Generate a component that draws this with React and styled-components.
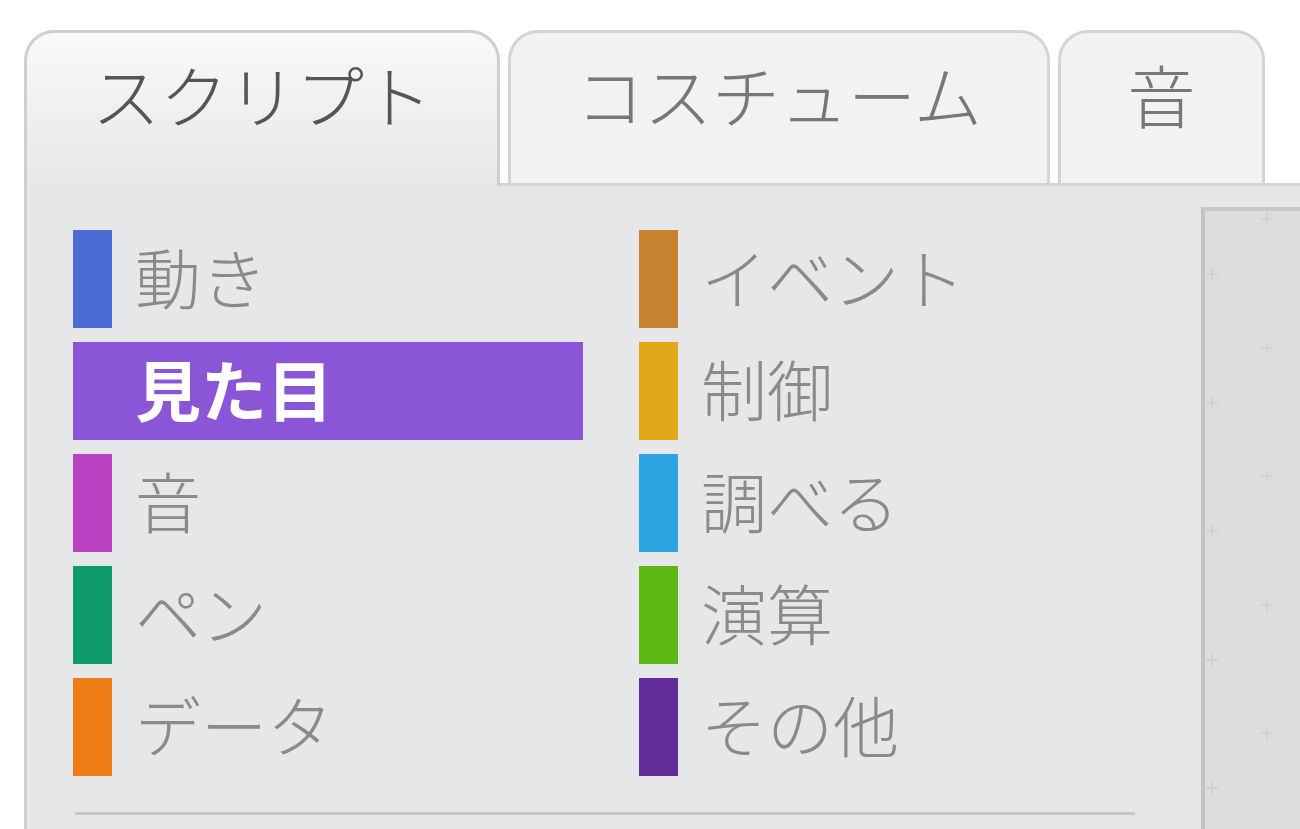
import React from 'react';
import styled, { createGlobalStyle } from 'styled-components';

const GlobalStyle = createGlobalStyle`
  html, body {
    margin: 0;
    padding: 0;
    background: #ffffff;
    font-family: "Noto Sans CJK JP", "Noto Sans", sans-serif;
  }
`;

const Page = styled.div`
  width: 1300px;
  height: 829px;
  overflow: hidden;
  padding: 30px 0 0 24px;
  box-sizing: border-box;
`;

const TabBar = styled.div`
  display: flex;
  align-items: flex-start;
  gap: 8px;
  height: 153px;
  position: relative;
  z-index: 2;
`;

const Tab = styled.div`
  box-sizing: border-box;
  width: ${p => p.$width}px;
  height: ${p => (p.$active ? 156 : 153)}px;
  border: 3px solid ${p => (p.$active ? '#cfcfcf' : '#d4d4d4')};
  border-bottom: none;
  border-radius: 30px 30px 0 0;
  background: ${p =>
    p.$active ? 'linear-gradient(180deg, #f8f9f9 0%, #e6e7e8 100%)' : '#f2f2f2'};
  color: ${p => (p.$active ? '#555555' : '#777777')};
  font-size: 68px;
  font-weight: 300;
  line-height: 1;
  text-align: center;
  padding-top: 27px;
  flex-shrink: 0;
`;

const Panel = styled.div`
  display: flex;
  height: 700px;
  background: #e6e7e8;
  border-top: 3px solid #d4d4d4;
  border-left: 3px solid #cfcfcf;
`;

const Palette = styled.div`
  width: 1174px;
  flex-shrink: 0;
  box-sizing: border-box;
  padding: 44px 0 0 46px;
`;

const Grid = styled.div`
  display: grid;
  grid-template-columns: 510px 510px;
  grid-auto-flow: column;
  grid-template-rows: repeat(5, 98px);
  column-gap: 56px;
  row-gap: 14px;
`;

const Category = styled.div`
  display: flex;
  align-items: center;
  height: 98px;
  background: ${p => (p.$selected ? p.$color : 'transparent')};
  color: ${p => (p.$selected ? '#ffffff' : '#8a8a8a')};
  font-size: 66px;
  font-weight: ${p => (p.$selected ? 700 : 300)};
  line-height: 1;
`;

const Label = styled.span`
  margin-top: -8px;
`;

const Swatch = styled.span`
  width: 39px;
  height: 98px;
  background: ${p => p.$color};
  flex-shrink: 0;
  margin-right: 23px;
`;

const Divider = styled.div`
  width: 1060px;
  height: 3px;
  margin: 36px 0 0 2px;
  background: #c6c6c6;
`;

const ScriptArea = styled.div`
  flex: 1;
  margin-top: 21px;
  border-top: 4px solid #c8c8c8;
  border-left: 4px solid #c4c4c4;
  background: #dcdddd;
  position: relative;
`;

const Plus = styled.span`
  position: absolute;
  left: ${p => p.$x}px;
  top: ${p => p.$y}px;
  width: 12px;
  height: 12px;
  filter: blur(0.6px);
  &::before, &::after {
    content: '';
    position: absolute;
    background: #d1d2d2;
  }
  &::before { left: 5px; top: 0; width: 2px; height: 12px; }
  &::after { left: 0; top: 5px; width: 12px; height: 2px; }
`;

const tabs = [
  { label: 'スクリプト', width: 476, active: true },
  { label: 'コスチューム', width: 542 },
  { label: '音', width: 207 },
];

const categories = [
  { label: '動き', color: '#4a6cd4' },
  { label: '見た目', color: '#8a55d7', selected: true },
  { label: '音', color: '#bb42c3' },
  { label: 'ペン', color: '#0e9a6c' },
  { label: 'データ', color: '#ee7d16' },
  { label: 'イベント', color: '#c88330' },
  { label: '制御', color: '#e1a91a' },
  { label: '調べる', color: '#2ca5e2' },
  { label: '演算', color: '#5cb712' },
  { label: 'その他', color: '#632d99' },
];

// faint grid marks on the script canvas, two staggered columns
const pluses = [];
for (let i = 0; i < 5; i++) {
  pluses.push({ x: 56, y: 2 + i * 128.5 });
  pluses.push({ x: 1, y: 57 + i * 128.5 });
}

export default function App() {
  return (
    <Page>
      <GlobalStyle />
      <TabBar>
        {tabs.map(t => (
          <Tab key={t.label} $width={t.width} $active={t.active}>
            {t.label}
          </Tab>
        ))}
      </TabBar>
      <Panel>
        <Palette>
          <Grid>
            {categories.map(c => (
              <Category key={c.label} $color={c.color} $selected={c.selected}>
                <Swatch $color={c.selected ? 'transparent' : c.color} />
                <Label>{c.label}</Label>
              </Category>
            ))}
          </Grid>
          <Divider />
        </Palette>
        <ScriptArea>
          {pluses.map((p, i) => (
            <Plus key={i} $x={p.x} $y={p.y} />
          ))}
        </ScriptArea>
      </Panel>
    </Page>
  );
}
